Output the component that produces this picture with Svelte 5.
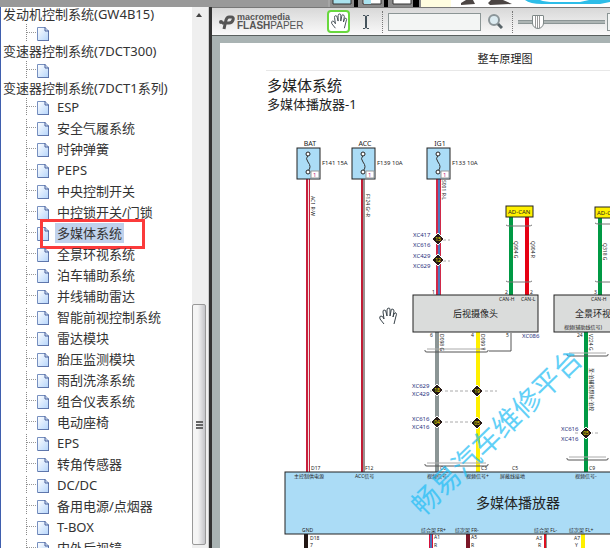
<script lang="ts">
  interface Group {
    title: string;
    items: string[];
  }

  const groups: Group[] = [
    { title: "发动机控制系统(GW4B15)", items: [""] },
    { title: "变速器控制系统(7DCT300)", items: [""] },
    {
      title: "变速器控制系统(7DCT1系列)",
      items: [
        "ESP", "安全气履系统", "时钟弹簧", "PEPS", "中央控制开关", "中控锁开关/门锁",
        "多媒体系统", "全景环视系统", "泊车辅助系统", "并线辅助雷达", "智能前视控制系统",
        "雷达模块", "胎压监测模块", "雨刮洗涤系统", "组合仪表系统", "电动座椅", "EPS",
        "转角传感器", "DC/DC", "备用电源/点烟器", "T-BOX", "内外后视镜",
      ],
    },
  ];

  let selected = $state("多媒体系统");
  let keyword = $state("");
  let page = $state("");
  let zoom = $state(19);

  const fuses = [
    { x: 296, name: "BAT", rating: "F141 15A" },
    { x: 351, name: "ACC", rating: "F139 10A" },
    { x: 426, name: "IG1", rating: "F133 10A" },
  ];

  // x, y1, y2, width, colour
  const wires: [number, number, number, number, string][] = [
    [306, 179, 472, 4, "#c8203c"],
    [308, 179, 472, 1, "#f3dfe2"],
    [361, 179, 472, 2, "#c01c34"],
    [363, 179, 472, 2, "#9a9292"],
    [436, 179, 295, 5, "#d02848"],
    [438, 179, 295, 2, "#4d77bd"],
    [509, 217, 295, 4, "#009944"],
    [525, 217, 295, 4, "#e60012"],
    [598, 218, 295, 4, "#009944"],
    [435, 332, 472, 4, "#8b9595"],
    [476, 332, 472, 4, "#fff000"],
    [584, 332, 472, 4, "#009944"],
    [304, 534, 548, 4, "#231815"],
    [429, 534, 548, 4, "#d7103a"],
    [430, 534, 548, 2, "#4d77bd"],
    [466, 534, 548, 4, "#7b1728"],
    [544, 534, 548, 3, "#df1020"],
    [546, 534, 548, 1, "#8b9595"],
    [581, 534, 548, 4, "#fff000"],
  ];

  const splices = [
    { x: 438, y: 239, no: "15" },
    { x: 438, y: 260, no: "12" },
    { x: 437, y: 390, no: "18" },
    { x: 477, y: 391, no: "19" },
    { x: 437, y: 422, no: "04" },
    { x: 477, y: 423, no: "05" },
    { x: 586, y: 433, no: "05" },
  ];

  const connectors: [number, number, string][] = [
    [413, 237, "XC417"], [413, 247, "XC616"], [413, 258, "XC429"], [413, 268, "XC629"],
    [412, 388, "XC629"], [412, 396, "XC429"], [412, 421, "XC616"], [412, 429, "XC416"],
    [561, 431, "XC616"], [561, 441, "XC416"], [522, 338, "XC086"],
  ];

  const pins: [number, number, string][] = [
    [432, 294, "1"], [505, 294, "2"], [530, 294, "2"], [594, 294, "3"],
    [430, 337, "6"], [471, 337, "4"], [506, 337, "5"], [577, 337, "24"],
    [499, 301, "CAN-H"], [521, 301, "CAN-L"], [591, 301, "CAN-H"],
    [311, 470, "D17"], [365, 470, "F12"], [440, 470, "C6"], [481, 470, "C3"],
    [512, 470, "C5"], [589, 470, "C9"],
    [310, 540, "D18"], [310, 547, "7"], [434, 539, "A1"], [471, 539, "A5"],
    [536, 540, "A3"], [574, 540, "A7"], [302, 532, "GND"],
    [434, 547, "R"], [471, 547, "R"], [538, 547, "R"], [575, 547, "Y"],
  ];

  const signals: [number, number, string][] = [
    [294, 478, "主控制供电源"], [355, 478, "ACC信号"], [427, 478, "视频信号-"], [466, 478, "视频信号+"],
    [500, 478, "屏蔽线接地"], [575, 478, "视频信号-"], [421, 532, "综合架 FR+"],
    [455, 532, "综次架 FR-"], [534, 532, "综合架 FL-"], [569, 532, "综次架 FL+"],
    [564, 329, "视频(辅助线信号)"],
  ];

  // wire colour codes, written along the wire
  const codes: [number, number, string][] = [
    [311, 196, "AC1 R-W"], [366, 194, "F124 Gr-R"], [442, 180, "S001 R-L"],
    [514, 241, "Q904 G"], [531, 241, "Q904 R"], [603, 243, "Q318 G"],
    [440, 334, "D098 G"], [481, 334, "D099 Y"], [589, 334, "V224 G"],
    [590, 368, "至-泊辅视频线-泊控"],
  ];

  const brackets: [number, number, number][] = [
    [506, 225, 26], [506, 281, 26], [595, 223, 26], [595, 281, 26],
    [425, 350, 63], [425, 464, 63], [567, 354, 41], [567, 458, 41],
  ];
</script>

{#snippet hand()}
  <path
    d="M5 16 L1 11 Q0 8 2 8 Q4 8 5 11 L4 4 Q4 2 5 2 Q7 2 7 4 L8 8 L8 2 Q8 0 10 0 Q11 0 11 2 L11 8 L12 3 Q12 1 13 1 Q15 1 15 3 L14 9 L15 6 Q16 4 17 5 Q18 6 17 8 L15 16"
    fill="#fff"
    stroke="#39434a"
    stroke-width="1"
    stroke-linejoin="round"
  />
{/snippet}

<div class="window">
  <div class="banner">
    <svg width="282" height="7" viewBox="328 0 282 7" aria-hidden="true">
      <rect x="328" width="282" height="7" fill="#a5a5a5" />
      <rect x="330" width="121" height="7" fill="#8b8b8b" />
      <path d="M354 0h4v7h-4zM384 0h4v7h-4zM413 0h6v7h-6z" fill="#000" />
      <path d="M333 -2h18v6h-18z" fill="#a9e2ef" stroke="#333" />
      <path d="M363 -2h18v6h-18z" fill="#fff" stroke="#333" />
      <path d="M364 0h7v4h-7z" fill="#a9e2ef" />
      <path d="M393 -2h18v6h-18z" fill="#fff" stroke="#333" />
      <rect x="421" width="30" height="7" fill="#fffde0" />
      <rect x="451" width="159" height="7" fill="#fff" />
      <path d="M466 0h7l2 4-14 1v-2zM491 0h12l9 4-22 1-2-2z" fill="#4b4543" />
      <path d="M525 0Q530 4 542 4H600L610 2V0H589L580 2H555Q545 2 540 0z" fill="#2dbde8" />
    </svg>
  </div>

  <div class="content">
    <nav class="tree">
      <div class="tree-inner">
        {#each groups as group}
          <div class="group-title">{group.title}</div>
          {#each group.items as item}
            <a
              class="row"
              class:current={item === selected}
              href="#item"
              aria-label={item || group.title}
              onclick={() => (selected = item)}
            >
              <span class="branch"></span>
              <svg class="doc" width="12" height="14" viewBox="0 0 12 14" aria-hidden="true">
                <defs>
                  <linearGradient id="paper" x1="0" y1="0" x2="1" y2="1">
                    <stop offset="0" stop-color="#fff" />
                    <stop offset="1" stop-color="#b5d5fb" />
                  </linearGradient>
                </defs>
                <path d="M.5 .5H8L11.500 4V13.500H.5z" fill="url(#paper)" stroke="#7790c0" />
                <path d="M8 0V4H12V14H1" fill="none" stroke="#495f99" />
              </svg>
              {#if item}<span class="label">{item}</span>{/if}
            </a>
          {/each}
        {/each}
      </div>
    </nav>

    <div class="scrollbar">
      <button class="arrow" aria-label="向上滚动"></button>
      <div class="thumb"><i></i><i></i><i></i></div>
    </div>

    <main class="viewer">
      <div class="toolbar">
        <svg class="mark" width="16" height="16" viewBox="0 0 16 16" aria-hidden="true">
          <path d="M5 15L7 6Q8 3 10 3H12Q15 3 14 6Q13 9 10 9H3" fill="none" stroke="#555" stroke-width="3" />
          <circle cx="2" cy="8" r="2" fill="#555" />
        </svg>
        <div class="brand">
          <span class="maker">macromedia</span>
          <span class="product"><b>FLASH</b>PAPER</span>
        </div>
        <button class="tool active" aria-label="抓手">
          <svg width="18" height="17" viewBox="-1 -1 20 19">{@render hand()}</svg>
        </button>
        <button class="tool" aria-label="选择文本">
          <svg width="8" height="14" viewBox="0 0 8 14">
            <path d="M1 .5H3L4 1.500L5 .5H7M1 13.500H3L4 12.500L5 13.500H7" fill="none" stroke="#45535c" />
            <path d="M4 1V13" stroke="#45535c" stroke-width="2" />
          </svg>
        </button>
        <span class="sep"></span>
        <input class="search" type="text" aria-label="查找" bind:value={keyword} />
        <button class="find" aria-label="查找下一个">
          <svg width="15" height="15" viewBox="0 0 15 15">
            <circle cx="6" cy="6" r="5" fill="#dcebf1" stroke="#8b9599" stroke-width="2" />
            <path d="M10 10L14 14" stroke="#596469" stroke-width="3" />
          </svg>
        </button>
        <span class="sep"></span>
        <input class="zoom" type="range" min="0" max="100" aria-label="缩放" bind:value={zoom} />
        <input class="page-no" type="text" aria-label="页码" bind:value={page} />
      </div>

      <div class="stage">
        <article class="sheet">
          <header>整车原理图</header>
          <h1>多媒体系统</h1>
          <h2>多媒体播放器-1</h2>

          <svg class="diagram" width="390" height="428" viewBox="220 120 390 428">
            {#each wires as [x, y1, y2, w, color]}
              <rect {x} y={y1} width={w} height={y2 - y1} fill={color} />
            {/each}

            {#each fuses as f}
              <text class="tiny" x={f.x + 14} y="146" text-anchor="middle">{f.name}</text>
              <rect x={f.x + 1} y="148" width="23" height="31" fill="#abdcf6" stroke="#222" />
              <path d="M{f.x + 12} 155q-3 4 0 7q4 5 0 9" fill="none" stroke="#333" />
              <circle cx={f.x + 12} cy="154" r="2" fill="#fff" stroke="#222" />
              <circle cx={f.x + 12} cy="172" r="2" fill="#fff" stroke="#222" />
              <rect x={f.x + 15} y="171" width="8" height="7" fill="#fff" stroke="#999" />
              <text class="fuse-pin" x={f.x + 17} y="177">1</text>
              <text class="rating" x={f.x + 26} y="165">{f.rating}</text>
            {/each}

            <g stroke="#222" fill="#fff000">
              <rect x="506" y="206" width="27" height="11" />
              <rect x="595" y="207" width="27" height="11" />
            </g>
            <text class="can" x="508" y="214">AD-CAN</text>
            <text class="can" x="597" y="215">AD-CAN</text>

            <g fill="none" stroke="#555">
              {#each brackets as [x, y, w]}
                {#if w < 30}
                  <path d="M{x} {y}q1 1 4 1h{w - 8}q3 0 4-1" stroke="#777" />
                {:else}
                  <path d="M{x} {y}v1q0 1 2 1h{w - 4}q2 0 2-1v-1" />
                  <path d="M{x + 2} {y - 1}h{w - 4}" stroke="#aaa" />
                {/if}
              {/each}
              <path d="M489 351H511V333" />
              <path d="M438 240H450M438 261H450M430 391H497M430 422H474M575 433H598" stroke="#aaa" stroke-dasharray="3 2" />
            </g>

            <g fill="#dadcdb" stroke="#222">
              <rect x="413" y="295" width="125" height="37" />
              <rect x="554" y="295" width="80" height="37" />
            </g>
            <rect x="285" y="472" width="340" height="62" fill="#abdcf6" stroke="#222" />

            <text class="block" x="453" y="317">后视摄像头</text>
            <text class="block" x="575" y="317">全景环视控制器</text>
            <text class="unit" x="476" y="508">多媒体播放器</text>

            {#each splices as s}
              <path d="M{s.x - 6} {s.y}L{s.x} {s.y - 6}L{s.x + 6} {s.y}L{s.x} {s.y + 6}z" fill="#231815" stroke="#fff" />
              <text class="splice" x={s.x} y={s.y + 2} text-anchor="middle">{s.no}</text>
            {/each}
            {#each connectors as [x, y, label]}
              <text class="connector" {x} {y}>{label}</text>
            {/each}
            {#each pins as [x, y, label]}
              <text class="pin" {x} {y}>{label}</text>
            {/each}
            {#each signals as [x, y, label]}
              <text class="signal" {x} {y}>{label}</text>
            {/each}
            {#each codes as [x, y, label]}
              <text class="pin" transform="translate({x} {y}) rotate(90)">{label}</text>
            {/each}

            <text class="watermark" transform="translate(423 517) rotate(-44)">畅易汽车维修平台</text>
            <g transform="translate(379 308)">{@render hand()}</g>
          </svg>
        </article>
      </div>
    </main>
  </div>
</div>

<style>
  :global(body) {
    overflow: hidden;
  }
  .window {
    height: 100vh;
    display: flex;
    flex-direction: column;
    background: #fff;
    color: #333;
    font-family: "Noto Sans", "Noto Sans CJK SC", sans-serif;
  }
  .banner {
    flex: none;
    height: 7px;
    display: flex;
    justify-content: flex-end;
    background: #999;
  }
  .content {
    flex: 1;
    min-height: 0;
    display: flex;
  }
  button {
    padding: 0;
    border: none;
    background: none;
  }

  .tree {
    flex: none;
    box-sizing: border-box;
    width: 192px;
    overflow: hidden;
    border-left: 1px solid #3f5fae;
    font-size: 13px;
    white-space: nowrap;
  }
  .tree-inner {
    padding-left: 2px;
  }
  .group-title {
    height: 16px;
    line-height: 16px;
  }
  .group-title:first-child {
    height: 15px;
    line-height: 15px;
  }
  .row {
    position: relative;
    display: flex;
    align-items: center;
    height: 21px;
    padding-left: 23px;
    color: inherit;
    text-decoration: none;
  }
  .branch {
    width: 10px;
    height: 17px;
    border-left: 1px dotted #888;
    background: linear-gradient(90deg, #999 50%, transparent 50%) 0 8px / 2px 1px repeat-x;
  }
  .doc {
    margin-top: 2px;
  }
  .label {
    margin-left: 6px;
    padding: 0 2px;
    line-height: 20px;
  }
  .current .label {
    background: #c0d2ec;
  }
  .current::after {
    content: "";
    position: absolute;
    left: 37px;
    top: -3px;
    width: 99px;
    height: 24px;
    border: 3px solid #fb3b3b;
  }

  .scrollbar {
    flex: none;
    box-sizing: border-box;
    width: 17px;
    display: flex;
    flex-direction: column;
    justify-content: space-between;
    padding: 3px 2px 3px 0;
    background: #efefef;
    border-right: 1px solid #ccc;
  }
  .arrow {
    align-self: center;
    border: 3px solid transparent;
    border-bottom: 4px solid #444;
  }
  .thumb {
    box-sizing: border-box;
    height: 45%;
    display: flex;
    flex-direction: column;
    align-items: center;
    justify-content: center;
    gap: 1px;
    border: 1px solid #999;
    border-radius: 2px;
    background: linear-gradient(90deg, #f5f5f5 40%, #c4c4c8);
  }
  .thumb i {
    width: 7px;
    height: 2px;
    background: #666;
  }

  .viewer {
    flex: 1;
    min-width: 0;
    display: flex;
    flex-direction: column;
    border-left: 3px solid #333;
  }
  .toolbar {
    flex: none;
    box-sizing: border-box;
    height: 29px;
    display: flex;
    align-items: center;
    overflow: hidden;
    padding-left: 7px;
    border-top: 1px solid #777;
    border-bottom: 1px solid #59605f;
    background: linear-gradient(#d8d8d8, #fafafa);
  }
  .mark {
    flex: none;
  }
  .brand {
    flex: none;
    width: 90px;
    margin-left: 2px;
    display: flex;
    flex-direction: column;
    color: #555;
    font-family: "Liberation Sans", sans-serif;
  }
  .maker {
    font-size: 9px;
    font-weight: bold;
    line-height: 8px;
  }
  .product {
    font-size: 10px;
    line-height: 10px;
  }
  .tool {
    flex: none;
    box-sizing: border-box;
    width: 23px;
    height: 23px;
    display: grid;
    place-items: center;
  }
  .tool + .tool {
    margin-left: 4px;
  }
  .tool.active {
    border: 2px solid #68d83e;
    border-radius: 4px;
    background: #fff;
  }
  .sep {
    flex: none;
    height: 22px;
    margin: 0 5px;
    border-left: 1px dotted #777;
  }
  .search,
  .page-no {
    flex: none;
    box-sizing: border-box;
    width: 93px;
    height: 18px;
    border: 1px solid #8b9595;
    background: #f3f5f4;
  }
  .find {
    flex: none;
    width: 15px;
    height: 15px;
    margin: 0 4px 0 7px;
    display: flex;
  }
  .zoom {
    flex: none;
    appearance: none;
    width: 87px;
    height: 16px;
    margin: 0 2px 0 0;
    background: linear-gradient(#8b9595 1px, #adb5b4 1px 3px, #8b9595 3px) center / 100% 4px no-repeat;
  }
  .zoom::-webkit-slider-thumb {
    appearance: none;
    box-sizing: border-box;
    width: 12px;
    height: 14px;
    border: 1px solid #7f8988;
    border-radius: 1px 1px 6px 6px;
    background: linear-gradient(90deg, #fff 2px, #999 2px 3px, #fff 3px 4px, #999 4px 5px, #fff 5px 6px, #999 6px 7px, #fff 7px);
  }

  .stage {
    flex: 1;
    min-height: 0;
    overflow: hidden;
    padding: 7px 0 0 8px;
    background: #a9b3b3;
  }
  .sheet {
    width: 570px;
    background: #fff;
    color: #222;
  }
  header {
    margin-left: 46px;
    padding-right: 46px;
    height: 27px;
    line-height: 32px;
    border-bottom: 1px solid #e8e8e8;
    font-size: 11px;
    text-align: center;
  }
  h1,
  h2 {
    margin: 0 0 0 47px;
    font-weight: normal;
  }
  h1 {
    padding-top: 4px;
    font-size: 15px;
    line-height: 20px;
  }
  h2 {
    padding-bottom: 7px;
    font-size: 13px;
    line-height: 18px;
  }
  .diagram {
    display: block;
  }
  .diagram text {
    fill: #222;
  }
  .diagram .tiny {
    font-size: 7px;
  }
  .diagram .rating {
    font-size: 6px;
  }
  .diagram .can {
    font-size: 6px;
  }
  .diagram .pin,
  .diagram .signal {
    font-size: 5px;
  }
  .diagram .fuse-pin {
    font-size: 6px;
    fill: #c0187a;
  }
  .diagram .connector {
    font-size: 6px;
    fill: #29307e;
  }
  .diagram .splice {
    font-size: 5px;
    fill: #fff000;
  }
  .diagram .block {
    font-size: 9px;
  }
  .diagram .unit {
    font-size: 14px;
  }
  .diagram .watermark {
    font-size: 28px;
    fill: #21bdf5;
    opacity: 0.7;
  }
</style>
